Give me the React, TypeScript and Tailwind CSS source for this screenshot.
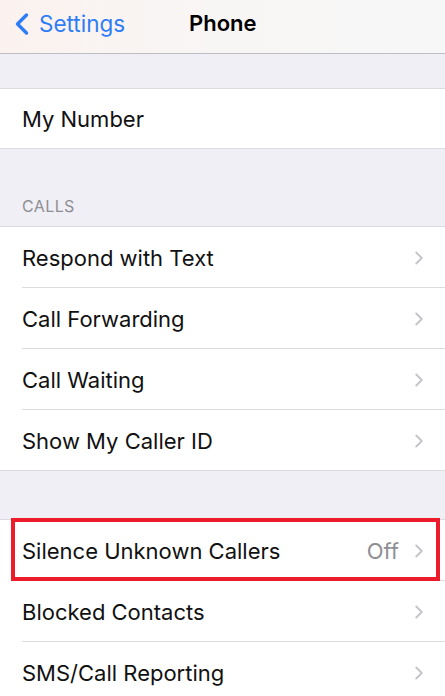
import { ChevronLeft, ChevronRight } from "lucide-react";

type Row = { label: string; value?: string; chevron?: boolean; highlight?: boolean };

const callRows: Row[] = [
  { label: "Respond with Text", chevron: true },
  { label: "Call Forwarding", chevron: true },
  { label: "Call Waiting", chevron: true },
  { label: "Show My Caller ID", chevron: true },
];

const blockRows: Row[] = [
  { label: "Silence Unknown Callers", value: "Off", chevron: true, highlight: true },
  { label: "Blocked Contacts", chevron: true },
  { label: "SMS/Call Reporting", chevron: true },
];

function Group({ rows }: { rows: Row[] }) {
  return (
    <div className="bg-white border-y border-[#dcdce0]">
      {rows.map((row, i) => (
        <div key={row.label} className="relative">
          <div className="h-[60px] flex items-center pl-[22px] pr-[21px] pt-[2px]">
            <span className="flex-1 text-[22px] text-[#111]">{row.label}</span>
            {row.value && <span className="text-[22px] text-[#8e8e93] mr-[9px]">{row.value}</span>}
            {row.chevron && <ChevronRight className="w-[22px] h-[22px] text-[#c4c4c8] -mr-[6px]" strokeWidth={2} />}
          </div>
          {i < rows.length - 1 && <div className="ml-[22px] h-px bg-[#dcdce0]" />}
          {row.highlight && (
            <div className="absolute left-[11px] right-[5px] -top-[2px] bottom-[0px] border-4 border-[#ec1c2a]" />
          )}
        </div>
      ))}
    </div>
  );
}

export default function App() {
  return (
    <div className="w-[445px] h-[696px] overflow-hidden bg-[#f0eff5]" style={{ fontFamily: "Inter, 'Liberation Sans', sans-serif" }}>
      {/* Nav bar */}
      <div className="h-[54px] border-b border-[#bdbdc2] bg-gradient-to-r from-[#fbf2ef] via-[#f8f6f5] to-[#f7f7f7] flex items-start pt-[6px] relative">
        <div className="flex items-center text-[#2f7df6] pl-[4px]">
          <ChevronLeft className="w-[36px] h-[36px] -mr-[1px]" strokeWidth={2.3} />
          <span className="text-[22.5px]">Settings</span>
        </div>
        <span className="absolute left-[189px] top-[6px] text-[22px] font-semibold text-black leading-[34px]">Phone</span>
      </div>

      <div className="h-[34px]" />
      <div className="bg-white border-y border-[#dcdce0] h-[61px] flex items-center pl-[22px] pt-[2px]">
        <span className="text-[22px] text-[#111]">My Number</span>
      </div>

      <div className="h-[77px] flex items-end pl-[22px] pb-[8px]">
        <span className="text-[16px] text-[#8e8e93] tracking-wide">CALLS</span>
      </div>
      <Group rows={callRows} />

      <div className="h-[48px]" />
      <Group rows={blockRows} />
    </div>
  );
}
